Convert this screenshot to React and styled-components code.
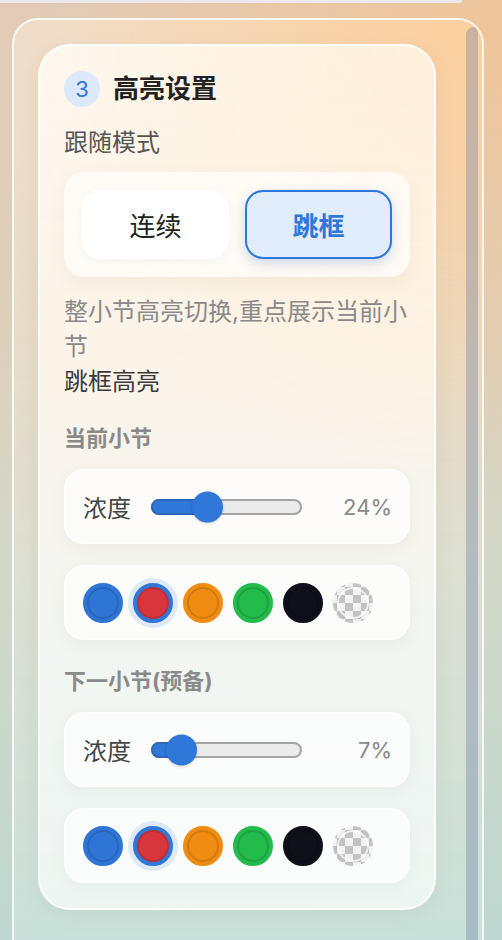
import React from "react";
import styled, { createGlobalStyle, css } from "styled-components";

const GlobalStyle = createGlobalStyle`
  html, body {
    margin: 0;
    padding: 0;
    overflow: hidden;
  }
  body {
    font-family: Inter, "Noto Sans CJK SC", "Noto Sans", sans-serif;
    background:
      radial-gradient(circle at 100% 4%, rgba(250, 192, 130, 0.55), rgba(250, 192, 130, 0) 45%),
      linear-gradient(180deg, #e2cbb6 0%, #dcd0bc 35%, #d3d8c8 60%, #bed7d0 100%);
    min-height: 940px;
  }
  * { box-sizing: border-box; }
`;

const Page = styled.div`
  height: 940px;
  padding: 0 18px 0 12px;
  display: flex;
  flex-direction: column;
`;

const PrevCard = styled.div`
  width: 462px;
  height: 3px;
  margin-left: -12px;
  background: rgba(236, 234, 240, 0.95);
  border-radius: 0 0 14px 0;
`;

const OuterPanel = styled.div`
  margin-top: 15px;
  flex: 1;
  display: flex;
  align-items: flex-start;
  padding: 7px 4px 0 24px;
  border: 2px solid rgba(255, 255, 255, 0.8);
  border-bottom: none;
  border-radius: 26px 26px 0 0;
  overflow: hidden;
  background:
    radial-gradient(circle at 100% 0%, rgba(255, 200, 140, 0.6), rgba(255, 200, 140, 0) 40%),
    linear-gradient(180deg, rgba(255, 238, 215, 0.5) 0%, rgba(245, 236, 222, 0.35) 50%, rgba(220, 240, 234, 0.4) 100%);
`;

const Card = styled.section`
  margin-top: 17px;
  width: 398px;
  padding: 25px 24px 25px;
  border-radius: 32px;
  border: 2px solid rgba(255, 255, 255, 0.85);
  background:
    radial-gradient(circle at 100% 0%, rgba(255, 236, 212, 0.7), rgba(255, 236, 212, 0) 45%),
    linear-gradient(180deg, rgba(255, 251, 245, 0.9) 0%, rgba(255, 248, 238, 0.85) 35%, rgba(246, 249, 246, 0.85) 70%, rgba(242, 248, 246, 0.88) 100%);
  box-shadow: 0 6px 20px rgba(120, 110, 90, 0.08);
  display: flex;
  flex-direction: column;
`;

const Scrollbar = styled.div`
  margin-left: 30px;
  width: 12px;
  align-self: stretch;
  border-radius: 8px 0 0 0;
  background: linear-gradient(180deg, rgba(130, 138, 160, 0.42) 0%, rgba(125, 140, 172, 0.45) 100%);
`;

const Header = styled.div`
  display: flex;
  align-items: center;
  gap: 13px;
  height: 36px;
`;

const Badge = styled.div`
  width: 36px;
  height: 36px;
  border-radius: 50%;
  background: #dbe9fa;
  color: #2f77d8;
  font-size: 22px;
  display: flex;
  align-items: center;
  justify-content: center;
`;

const Title = styled.h2`
  margin: 0;
  font-size: 26px;
  font-weight: 700;
  color: #222;
  line-height: 36px;
`;

const FieldLabel = styled.div`
  margin-top: 21px;
  font-size: 24px;
  line-height: 30px;
  color: #555;
`;

const Segment = styled.div`
  margin-top: 14px;
  display: grid;
  grid-template-columns: 1fr 1fr;
  gap: 16px;
  padding: 18px;
  border-radius: 20px;
  background: rgba(255, 255, 255, 0.6);
  box-shadow: 0 6px 18px rgba(110, 100, 80, 0.07);
`;

const ModeButton = styled.button`
  height: 69px;
  border-radius: 18px;
  font-family: inherit;
  font-size: 26px;
  cursor: pointer;
  border: 2px solid transparent;
  background: #fff;
  color: #222;
  font-weight: 400;
  box-shadow: 0 2px 8px rgba(0, 0, 0, 0.03);
  ${(p) =>
    p.$active &&
    css`
      background: #e1edfb;
      border-color: #2f77d8;
      color: #2f77d8;
      font-weight: 700;
      box-shadow: 0 4px 12px rgba(47, 119, 216, 0.25);
    `}
`;

const Desc = styled.p`
  margin: 17px 0 0;
  font-size: 24px;
  line-height: 35px;
  color: #8a8a8a;
`;

const DescStrong = styled.p`
  margin: 0;
  font-size: 24px;
  line-height: 35px;
  color: #3a3a3a;
`;

const SectionTitle = styled.h3`
  margin: ${(p) => (p.$first ? "24px" : "26px")} 0 0;
  font-size: 22px;
  line-height: 30px;
  font-weight: 700;
  color: #8a8a8a;
`;

const Panel = styled.div`
  height: 75px;
  border-radius: 20px;
  background: rgba(255, 255, 255, 0.72);
  border: 1px solid rgba(255, 255, 255, 0.9);
  box-shadow: 0 5px 16px rgba(100, 100, 90, 0.06);
  display: flex;
  align-items: center;
  padding: 0 17px 0 18px;
  margin-top: ${(p) => p.$gap}px;
`;

const SliderLabel = styled.span`
  font-size: 24px;
  color: #444;
`;

const Track = styled.div`
  position: relative;
  margin-left: 20px;
  width: 151px;
  height: 16px;
  border: 2px solid #a4a4a4;
  border-radius: 8px;
  background: #ebebeb;
`;

const Fill = styled.div`
  position: absolute;
  left: -2px;
  top: -2px;
  bottom: -2px;
  border-radius: 8px;
  background: #2f77d8;
  border: 2px solid #2d66b8;
`;

const Thumb = styled.div`
  position: absolute;
  top: 50%;
  width: 31px;
  height: 31px;
  margin-left: -15.5px;
  transform: translateY(-50%);
  border-radius: 50%;
  background: #2f77d8;
  box-shadow: 0 1px 3px rgba(0, 0, 0, 0.18);
`;

const Value = styled.span`
  flex: 1;
  text-align: right;
  font-size: 22px;
  color: #888;
`;

const Swatches = styled.div`
  display: flex;
  gap: 10px;
`;

const Swatch = styled.div`
  position: relative;
  width: 40px;
  height: 40px;
  border-radius: 50%;
  border: 4px solid ${(p) => (p.$selected ? "#2f77d8" : p.$color)};
  background: ${(p) => p.$color};
  box-shadow: ${(p) => (p.$selected ? "0 0 0 5px rgba(47, 119, 216, 0.14)" : "none")};
  &::after {
    content: "";
    position: absolute;
    inset: 0;
    border-radius: 50%;
    border: 2px solid rgba(0, 0, 0, 0.13);
  }
  ${(p) =>
    p.$clear &&
    css`
      border-color: transparent;
      background: repeating-conic-gradient(#c3c3c3 0 25%, #f2f2f2 0 50%) -4px -4px / 16px 16px;
      background-origin: border-box;
      &::after {
        border: 2px solid rgba(255, 255, 255, 0.75);
        box-shadow: 0 0 0 1px rgba(0, 0, 0, 0.06);
      }
    `}
`;

const colors = [
  { c: "#2e75d6" },
  { c: "#d8353d", selected: true },
  { c: "#f08c12" },
  { c: "#22bb4c" },
  { c: "#0e111a" },
  { c: "transparent", clear: true },
];

function Slider({ pos, value }) {
  const x = 151 * pos;
  return (
    <Panel $gap={16}>
      <SliderLabel>浓度</SliderLabel>
      <Track>
        <Fill style={{ width: x + 2 }} />
        <Thumb style={{ left: x - 2 }} />
      </Track>
      <Value>{value}</Value>
    </Panel>
  );
}

function ColorRow() {
  return (
    <Panel $gap={21}>
      <Swatches>
        {colors.map((s, i) => (
          <Swatch key={i} $color={s.c} $selected={s.selected} $clear={s.clear} />
        ))}
      </Swatches>
    </Panel>
  );
}

export default function App() {
  return (
    <>
      <GlobalStyle />
      <Page>
        <PrevCard />
        <OuterPanel>
          <Card>
            <Header>
              <Badge>3</Badge>
              <Title>高亮设置</Title>
            </Header>
            <FieldLabel>跟随模式</FieldLabel>
            <Segment>
              <ModeButton>连续</ModeButton>
              <ModeButton $active>跳框</ModeButton>
            </Segment>
            <Desc>整小节高亮切换,重点展示当前小节</Desc>
            <DescStrong>跳框高亮</DescStrong>

            <SectionTitle $first>当前小节</SectionTitle>
            <Slider pos={0.377} value="24%" />
            <ColorRow />

            <SectionTitle>下一小节(预备)</SectionTitle>
            <Slider pos={0.205} value="7%" />
            <ColorRow />
          </Card>
          <Scrollbar />
        </OuterPanel>
      </Page>
    </>
  );
}
